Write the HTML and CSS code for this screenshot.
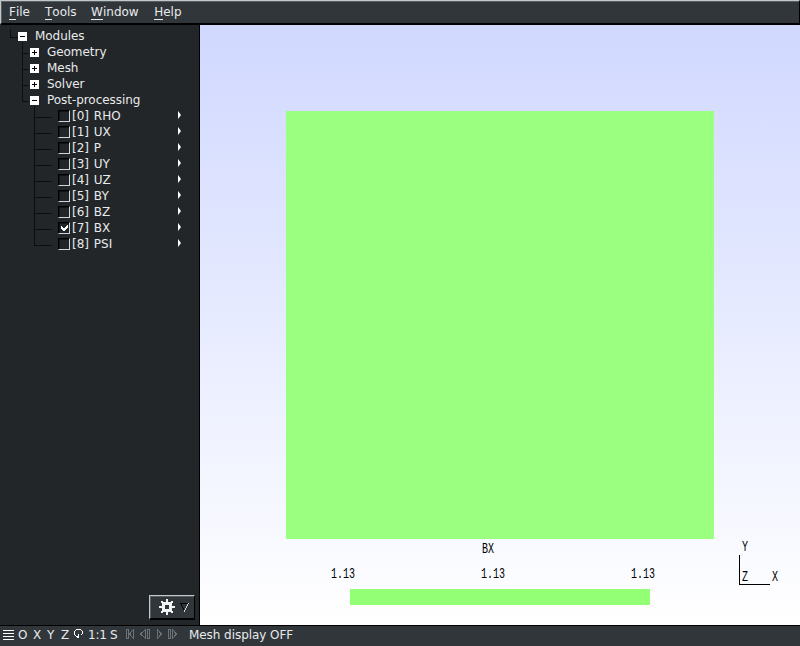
FILE: index.html
```
<!DOCTYPE html>
<html lang="en">
<head>
<meta charset="utf-8">
<title>Modules</title>
<link rel="stylesheet" href="styles.css">
</head>
<body>
<nav class="menu"><span><u>F</u>ile</span><span><u>T</u>ools</span><span><u>W</u>indow</span><span><u>H</u>elp</span></nav>
<main class="main">
<aside class="side">
<svg class="lines" width="60" height="230" shape-rendering="crispEdges"><path d="M10.5 4v8.5H18M22.5 17v59.5M23 28.5h6M23 44.5h6M23 60.5h6M22 76.5h7M34.5 81v139.5M35 92.5h17M35 108.5h17M35 124.5h17M35 140.5h17M35 156.5h17M35 172.5h17M35 188.5h17M35 204.5h17M34 220.5h18"/></svg>
<ul class="tree">
<li class="root"><i class="box"></i>Modules</li>
<li class="node"><i class="box plus"></i>Geometry</li>
<li class="node"><i class="box plus"></i>Mesh</li>
<li class="node"><i class="box plus"></i>Solver</li>
<li class="node"><i class="box"></i>Post-processing</li>
<li class="leaf"><i class="check"></i>[0] RHO<i class="arrow"></i></li>
<li class="leaf"><i class="check"></i>[1] UX<i class="arrow"></i></li>
<li class="leaf"><i class="check"></i>[2] P<i class="arrow"></i></li>
<li class="leaf"><i class="check"></i>[3] UY<i class="arrow"></i></li>
<li class="leaf"><i class="check"></i>[4] UZ<i class="arrow"></i></li>
<li class="leaf"><i class="check"></i>[5] BY<i class="arrow"></i></li>
<li class="leaf"><i class="check"></i>[6] BZ<i class="arrow"></i></li>
<li class="leaf"><i class="check"><svg width="7" height="6" shape-rendering="crispEdges"><path d="M0 1h1v1h1v1h2v-1h1v-1h1v-1h1v3h-1v1h-1v1h-1v1h-2v-1h-1v-1h-1z" fill="#fff"/></svg></i>[7] BX<i class="arrow"></i></li>
<li class="leaf"><i class="check"></i>[8] PSI<i class="arrow"></i></li>
</ul>
<button class="gear" aria-label="Options">
<svg width="36" height="20" shape-rendering="crispEdges"><g fill="#f2f4f4"><path fill-rule="evenodd" d="M4 4h8v1h1v8h-1v1H4v-1H3V5h1zM6 7v4h4V7z"/><path d="M7 1h2v3H7zM7 14h2v3H7zM0 8h3v2H0zM13 8h3v2h-3zM2 3h2v2H2zM12 3h2v2h-2zM2 13h2v2H2zM12 13h2v2h-2z"/></g><path d="M21 5h9v1h-9zM22 6h1v2h-1zM23 8h1v2h-1zM24 10h1v2h-1zM25 12h1v2h-1z" fill="#000"/><path d="M29 5h1v1h-1zM28 6h1v2h-1zM27 8h1v2h-1zM26 10h1v2h-1zM25 12h1v2h-1z" fill="#d0d6d8"/></svg>
</button>
</aside>
<section class="view">
<div class="mesh"></div>
<div class="title bitmap">BX</div>
<div class="scale bitmap"><span>1.13</span><span>1.13</span><span>1.13</span></div>
<div class="bar"></div>
<div class="axes"><b class="bitmap ay">Y</b><b class="bitmap az">Z</b><b class="bitmap ax">X</b></div>
</section>
</main>
<footer class="status">
<svg class="burger" width="11" height="10" shape-rendering="crispEdges"><path d="M0 .5h11M0 3.500h11M0 6.500h11M0 9.500h11" stroke="#fff"/></svg>
<span class="o">O</span><span class="x">X</span><span class="y">Y</span><span class="z">Z</span>
<svg class="rotate" width="9" height="10" shape-rendering="crispEdges"><path d="M2 0h5v1H2zM1 1h1v1H1zM7 1h1v1H7zM0 2h1v4H0zM8 2h1v3H8zM1 6h1v1H1zM2 7h3v1H2zM4 5h1v4H4zM3 8h1v1H3zM7 5h1v1H7z" fill="#fff"/></svg>
<span class="ratio">1:1</span><span class="s">S</span>
<svg class="player" width="52" height="10" shape-rendering="crispEdges"><path d="M.5.5h2v9h-2zM7.500.5v9L3.500 5zM19.500.5v9L14.500 5zM21.500.5h2v9h-2zM31.500.5v9L35.500 5zM42.500.5h2v9h-2zM46.500.5v9L50.500 5z" fill="none" stroke="#6c7276"/></svg>
<span class="message">Mesh display OFF</span>
</footer>
</body>
</html>
```
FILE: styles.css
```
* { box-sizing: border-box; }
body {
  margin: 0;
  width: 800px;
  height: 646px;
  display: flex;
  flex-direction: column;
  overflow: hidden;
  background: #232629;
  color: #e8eaeb;
  font: 12px/16px "DejaVu Sans", sans-serif;
}
.menu {
  height: 25px;
  display: flex;
  gap: 15px;
  padding: 3px 0 0 8px;
  background: #31363b;
  border: 1px solid #c0c8ca;
  border-right-color: #000;
  border-bottom: 2px solid #000;
  box-shadow: inset 1px 1px #596064;
}
.menu span:nth-child(3) { margin: 0 .5px 0 -.5px; }
.menu u { text-decoration: none; box-shadow: 0 1px #e8eaeb; display: inline-block; height: 15px; }
.main { height: 600px; display: flex; }
.side {
  width: 200px;
  position: relative;
  border-right: 1px solid #000;
  display: flex;
  flex-direction: column;
  justify-content: space-between;
}
.lines { position: absolute; left: 0; top: 0; fill: none; stroke: #0c0e0f; }
.tree { list-style: none; margin: 0; padding: 3px 0 0; }
.tree li { height: 16px; display: flex; position: relative; }
.root { padding-left: 18px; letter-spacing: -.05px; }
.node { padding-left: 30px; letter-spacing: -.05px; }
.leaf { padding-left: 58px; word-spacing: 1px; }
.box {
  width: 9px;
  height: 9px;
  margin: 4px 8px 0 0;
  background: linear-gradient(#000, #000) 2px 4px / 5px 1px no-repeat, #fff;
}
.plus {
  background: linear-gradient(#000, #000) 2px 4px / 5px 1px no-repeat, linear-gradient(#000, #000) 4px 2px / 1px 5px no-repeat, #fff;
}
.check {
  width: 12px;
  height: 12px;
  margin: 2px 2px 0 0;
  border: 1px solid #000;
  border-right-color: #d0d6d8;
  border-bottom-color: #d0d6d8;
  box-shadow: inset 1px 1px #101314;
}
.check svg { display: block; margin: 2px; }
.arrow { margin: 3px 18px 0 auto; width: 3px; border: 4px solid transparent; border-left: 3px solid #fff; border-right: 0; height: 8px; }
.gear {
  width: 46px;
  height: 25px;
  margin: 0 0 5px 149px;
  padding: 2px 0 0 9px;
  background: #31363b;
  border: 1px solid #c0c8ca;
  border-right: 1px solid #000;
  border-bottom: 2px solid #000;
  box-shadow: inset 1px 1px #596064;
}
.gear svg { display: block; }
.view {
  width: 600px;
  background: linear-gradient(#d0d8ff, #fff);
  display: grid;
  grid-template-rows: 514px 20px 30px 16px;
  position: relative;
}
.mesh { width: 428px; margin: 86px 0 0 86px; background: #9bff80; }
.bitmap { font: 10px/10px "Liberation Mono", monospace; color: #000; transform: scaleY(1.4); }
.title { margin: 6px 0 4px 282px; }
.scale { display: flex; gap: 126px; margin: 11px 0 9px 131px; }
.bar { width: 300px; margin-left: 150px; background: #92ff75; }
.axes { position: absolute; left: 539px; top: 530px; width: 31px; height: 30px; border: solid #000; border-width: 0 0 1px 1px; }
.axes b { position: absolute; }
.ay { left: 2px; top: -12px; }
.az { left: 2px; top: 18px; }
.ax { left: 32px; top: 18px; }
.status {
  height: 21px;
  display: flex;
  background: #31363b;
  border-top: 1px solid #000;
  padding-left: 3px;
  line-height: 18px;
}
.burger { margin: 4px 4px 0 0; }
.o { width: 15px; }
.x { width: 14px; }
.y { width: 14px; }
.z { width: 13px; }
.rotate { margin: 3px 5px 0 0; }
.ratio { width: 22px; letter-spacing: -.2px; }
.s { width: 16px; }
.player { margin: 3px 11px 0 0; }
.message { letter-spacing: -.06px; }
```
